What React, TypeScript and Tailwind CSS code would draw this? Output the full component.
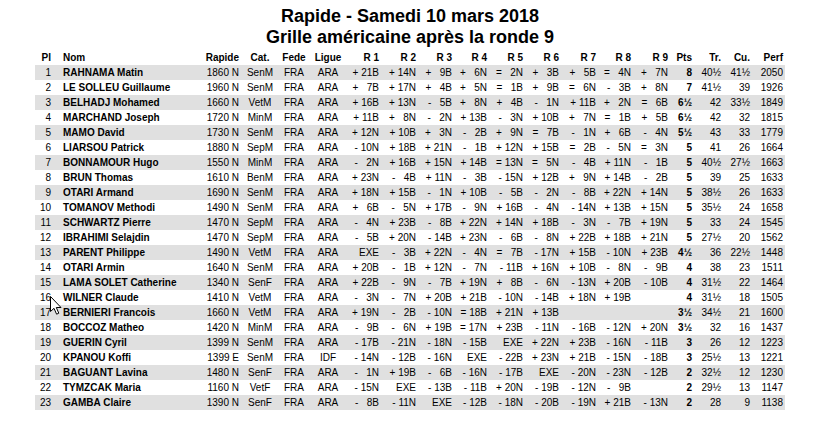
type Row = {
  pl: number;
  nom: string;
  elo: string;
  cat: string;
  ligue: string;
  rondes: string[];
  pts: string;
  tr: string;
  cu: string;
  perf: string;
};

const raw: [string, string, string, string, string, string, string, string, string][] = [
  ["RAHNAMA Matin", "1860 N", "SenM", "ARA", "+21B +14N +9B +6N =2N +3B +5B =4N +7N", "8", "40½", "41½", "2050"],
  ["LE SOLLEU Guillaume", "1960 N", "SenM", "ARA", "+7B +17N +4B +5N =1B +9B =6N -3B +8N", "7", "41½", "39", "1926"],
  ["BELHADJ Mohamed", "1660 N", "VetM", "ARA", "+16B +13N -5B +8N +4B -1N +11B +2N =6B", "6½", "42", "33½", "1849"],
  ["MARCHAND Joseph", "1720 N", "MinM", "ARA", "+11B +8N -2N +13B -3N +10B +7N =1B +5B", "6½", "42", "32", "1815"],
  ["MAMO David", "1730 N", "SenM", "ARA", "+12N +10B +3N -2B +9N =7B -1N +6B -4N", "5½", "43", "33", "1779"],
  ["LIARSOU Patrick", "1880 N", "SepM", "ARA", "-10N +18B +21N -1B +12N +15B =2B -5N =3N", "5", "41", "26", "1664"],
  ["BONNAMOUR Hugo", "1550 N", "MinM", "ARA", "-2N +16B +15N +14B =13N =5N -4B +11N -1B", "5", "40½", "27½", "1663"],
  ["BRUN Thomas", "1610 N", "BenM", "ARA", "+23N -4B +11N -3B -15N +12B +9N +14B -2B", "5", "39", "25", "1633"],
  ["OTARI Armand", "1690 N", "SenM", "ARA", "+18N +15B -1N +10B -5B -2N -8B +22N +14N", "5", "38½", "26", "1633"],
  ["TOMANOV Methodi", "1490 N", "SenM", "ARA", "+6B -5N +17B -9N +16B -4N -14N +13B +15N", "5", "35½", "24", "1658"],
  ["SCHWARTZ Pierre", "1470 N", "SepM", "ARA", "-4N +23B -8B +22N +14N +18B -3N -7B +19N", "5", "33", "24", "1545"],
  ["IBRAHIMI Selajdin", "1470 N", "SepM", "ARA", "-5B +20N -14B +23N -6B -8N +22B +18B +21N", "5", "27½", "20", "1562"],
  ["PARENT Philippe", "1490 N", "VetM", "ARA", "EXE -3B +22N -4N =7B -17N +15B -10N +23B", "4½", "36", "22½", "1448"],
  ["OTARI Armin", "1640 N", "SenM", "ARA", "+20B -1B +12N -7N -11B +16N +10B -8N -9B", "4", "38", "23", "1511"],
  ["LAMA SOLET Catherine", "1340 N", "SenF", "ARA", "+22B -9N -7B +19N +8B -6N -13N +20B -10B", "4", "31½", "22", "1464"],
  ["WILNER Claude", "1410 N", "VetM", "ARA", "-3N -7N +20B +21B -10N -14B +18N +19B .", "4", "31½", "18", "1505"],
  ["BERNIERI Francois", "1660 N", "VetM", "ARA", "+19N -2B -10N =18B +21N +13B . . .", "3½", "34½", "21", "1600"],
  ["BOCCOZ Matheo", "1420 N", "MinM", "ARA", "-9B -6N +19B =17N +23B -11N -16B -12N +20N", "3½", "32", "16", "1437"],
  ["GUERIN Cyril", "1399 N", "SenM", "ARA", "-17B -21N -18N -15B EXE +22N +23B -16N -11B", "3", "26", "12", "1223"],
  ["KPANOU Koffi", "1399 E", "SenM", "IDF", "-14N -12B -16N EXE -22B +23N +21B -15N -18B", "3", "25½", "13", "1221"],
  ["BAGUANT Lavina", "1480 N", "SenF", "ARA", "-1N +19B -6B -16N -17B EXE -20N -23N -12B", "2", "32½", "12", "1230"],
  ["TYMZCAK Maria", "1160 N", "VetF", "ARA", "-15N EXE -13B -11B +20N -19B -12N -9B .", "2", "29½", "13", "1147"],
  ["GAMBA Claire", "1390 N", "SenF", "ARA", "-8B -11N EXE -12B -18N -20B -19N +21B -13N", "2", "28", "9", "1138"],
];

// "+7B" -> "+  7B" (two spaces take the width of one digit)
const fmt = (r: string) => {
  if (r === "." || r === "EXE") return r === "." ? "" : r;
  const sign = r[0];
  const num = r.slice(1, -1);
  const col = r.slice(-1);
  return `${sign} ${num.length < 2 ? "  " + num : num}${col}`;
};

const rows: Row[] = raw.map((r, i) => ({
  pl: i + 1,
  nom: r[0],
  elo: r[1],
  cat: r[2],
  ligue: r[3],
  rondes: r[4].split(" ").map(fmt),
  pts: r[5],
  tr: r[6],
  cu: r[7],
  perf: r[8],
}));

const widths = [18, 147, 41, 38, 30, 38, 34, 37, 36, 35, 36, 36, 37, 35, 37, 24, 29, 29, 33];

const Cursor = () => (
  <svg
    className="absolute left-[50px] top-[296px]"
    width="12"
    height="19"
    viewBox="0 0 12 19"
  >
    <path
      d="M0.5 0.5 L0.5 15.5 L4 12.3 L6.6 18.2 L8.8 17.2 L6.3 11.5 L11 11.5 Z"
      fill="#fff"
      stroke="#000"
      strokeWidth="1"
      strokeLinejoin="round"
    />
  </svg>
);

export default function App() {
  return (
    <div className="relative w-[820px] h-[437px] bg-white text-black font-['Liberation_Sans',Arial,sans-serif]">
      <div className="pt-[6px] text-center text-[18px] leading-[21px] font-bold">
        <div>Rapide - Samedi 10 mars 2018</div>
        <div>Grille américaine après la ronde 9</div>
      </div>

      <table className="mt-[2px] mx-auto w-[750px] table-fixed border-collapse text-[10px] leading-[15px]">
        <colgroup>
          {widths.map((w, i) => (
            <col key={i} style={{ width: w }} />
          ))}
        </colgroup>
        <thead>
          <tr className="h-[15px] font-bold">
            <th className="p-0 pr-[2px] text-right font-bold">Pl</th>
            <th className="p-0 pl-[10px] text-left font-bold">Nom</th>
            <th className="p-0 pr-[2px] text-right font-bold">Rapide</th>
            <th className="p-0 text-center font-bold">Cat.</th>
            <th className="p-0 text-center font-bold">Fede</th>
            <th className="p-0 text-center font-bold">Ligue</th>
            {[1, 2, 3, 4, 5, 6, 7, 8, 9].map((n) => (
              <th key={n} className="p-0 pr-[2px] text-right font-bold whitespace-pre">
                R {n}
              </th>
            ))}
            <th className="p-0 pr-[2px] text-right font-bold">Pts</th>
            <th className="p-0 pr-[2px] text-right font-bold">Tr.</th>
            <th className="p-0 pr-[2px] text-right font-bold">Cu.</th>
            <th className="p-0 pr-[2px] text-right font-bold">Perf</th>
          </tr>
        </thead>
        <tbody>
          {rows.map((r) => (
            <tr key={r.pl} className={r.pl % 2 === 1 ? "h-[15px] bg-[#e0e0e0]" : "h-[15px]"}>
              <td className="p-0 pr-[2px] text-right">{r.pl}</td>
              <td className="p-0 pl-[10px] text-left font-bold whitespace-nowrap">{r.nom}</td>
              <td className="p-0 pr-[2px] text-right whitespace-nowrap">{r.elo}</td>
              <td className="p-0 text-center">{r.cat}</td>
              <td className="p-0 text-center">FRA</td>
              <td className="p-0 text-center">{r.ligue}</td>
              {r.rondes.map((x, i) => (
                <td key={i} className="p-0 pr-[2px] text-right whitespace-pre">
                  {x}
                </td>
              ))}
              <td className="p-0 pr-[2px] text-right font-bold">{r.pts}</td>
              <td className="p-0 pr-[2px] text-right">{r.tr}</td>
              <td className="p-0 pr-[2px] text-right">{r.cu}</td>
              <td className="p-0 pr-[2px] text-right">{r.perf}</td>
            </tr>
          ))}
        </tbody>
      </table>

      <Cursor />
    </div>
  );
}
